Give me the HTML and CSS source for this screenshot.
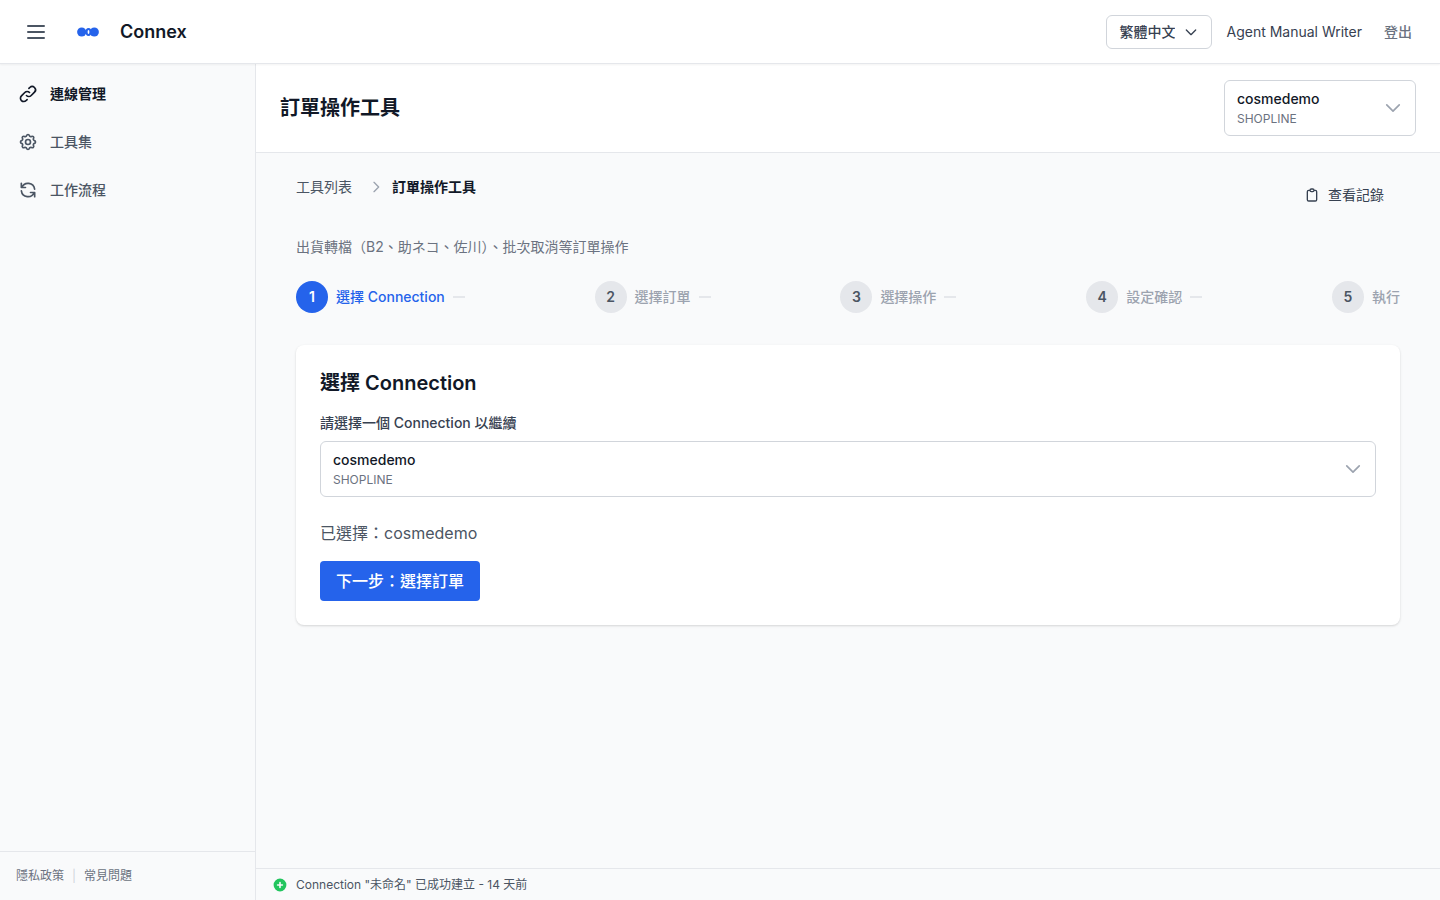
FILE: index.html
```html
<!DOCTYPE html>
<html lang="zh-Hant">
<head>
    <meta charset="UTF-8">
    <meta name="viewport" content="width=device-width, initial-scale=1.0">
    <title>訂單操作工具 - Connex</title>
    <link rel="stylesheet" href="styles.css">
</head>
<body>
    <header class="topbar">
        <button type="button" class="menu-toggle" aria-label="Menu">
            <svg class="icon icon-lg" viewBox="0 0 24 24"><path d="M4 6h16M4 12h16M4 18h16"/></svg>
        </button>
        <a href="#" class="brand">
            <svg class="logo" viewBox="0 0 32 32" aria-hidden="true">
                <circle cx="9.7" cy="16" r="4.6"/>
                <circle cx="22.3" cy="16" r="4.6"/>
                <ellipse class="logo-ring" cx="16.5" cy="16" rx="1.9" ry="3"/>
            </svg>
            <span class="brand-name">Connex</span>
        </a>
        <div class="topbar-right">
            <div class="lang">
                <select class="lang-select" aria-label="Language">
                    <option>繁體中文</option>
                </select>
                <svg class="icon icon-sm lang-arrow" viewBox="0 0 24 24"><path d="M19 9l-7 7-7-7"/></svg>
            </div>
            <span class="user-name">Agent Manual Writer</span>
            <button type="button" class="logout">登出</button>
        </div>
    </header>

    <div class="layout">
        <aside class="sidebar">
            <nav class="nav">
                <a href="#" class="nav-item active">
                    <svg class="icon" viewBox="0 0 24 24"><path d="M13.828 10.172a4 4 0 00-5.656 0l-4 4a4 4 0 105.656 5.656l1.102-1.101m-.758-4.899a4 4 0 005.656 0l4-4a4 4 0 00-5.656-5.656l-1.1 1.1"/></svg>
                    連線管理
                </a>
                <a href="#" class="nav-item">
                    <svg class="icon" viewBox="0 0 24 24"><path d="M10.325 4.317c.426-1.756 2.924-1.756 3.35 0a1.724 1.724 0 002.573 1.066c1.543-.94 3.31.826 2.37 2.37a1.724 1.724 0 001.065 2.572c1.756.426 1.756 2.924 0 3.35a1.724 1.724 0 00-1.066 2.573c.94 1.543-.826 3.31-2.37 2.37a1.724 1.724 0 00-2.572 1.065c-.426 1.756-2.924 1.756-3.35 0a1.724 1.724 0 00-2.573-1.066c-1.543.94-3.31-.826-2.37-2.37a1.724 1.724 0 00-1.065-2.572c-1.756-.426-1.756-2.924 0-3.35a1.724 1.724 0 001.066-2.573c-.94-1.543.826-3.31 2.37-2.37.996.608 2.296.07 2.572-1.065z"/><path d="M15 12a3 3 0 11-6 0 3 3 0 016 0z"/></svg>
                    工具集
                </a>
                <a href="#" class="nav-item">
                    <svg class="icon" viewBox="0 0 24 24"><path d="M4 4v5h.582m15.356 2A8.001 8.001 0 004.582 9m0 0H9m11 11v-5h-.581m0 0a8.003 8.003 0 01-15.357-2m15.357 2H15"/></svg>
                    工作流程
                </a>
            </nav>
            <div class="sidebar-footer">
                <a href="#">隱私政策</a>
                <span class="divider">|</span>
                <a href="#">常見問題</a>
            </div>
        </aside>

        <main class="main">
            <div class="page-header">
                <h1>訂單操作工具</h1>
                <button type="button" class="picker picker-small" aria-haspopup="listbox">
                    <span class="picker-text">
                        <span class="picker-name">cosmedemo</span>
                        <span class="picker-type">SHOPLINE</span>
                    </span>
                    <svg class="icon icon-muted" viewBox="0 0 24 24"><path d="M19.5 8.25l-7.5 7.5-7.5-7.5"/></svg>
                </button>
            </div>

            <div class="content">
                <div class="toolbar">
                    <nav class="breadcrumb">
                        <a href="#">工具列表</a>
                        <svg class="icon icon-sm icon-muted" viewBox="0 0 24 24"><path d="M9 5l7 7-7 7"/></svg>
                        <span class="current">訂單操作工具</span>
                    </nav>
                    <button type="button" class="log-button">
                        <svg class="icon icon-sm" viewBox="0 0 24 24"><path d="M9 5H7a2 2 0 00-2 2v12a2 2 0 002 2h10a2 2 0 002-2V7a2 2 0 00-2-2h-2M9 5a2 2 0 002 2h2a2 2 0 002-2M9 5a2 2 0 012-2h2a2 2 0 012 2"/></svg>
                        查看記錄
                    </button>
                </div>

                <p class="description">出貨轉檔（B2、助ネコ、佐川）、批次取消等訂單操作</p>

                <ol class="steps">
                    <li class="step active"><span class="step-number">1</span><span>選擇 Connection</span></li>
                    <li class="step"><span class="step-number">2</span><span>選擇訂單</span></li>
                    <li class="step"><span class="step-number">3</span><span>選擇操作</span></li>
                    <li class="step"><span class="step-number">4</span><span>設定確認</span></li>
                    <li class="step"><span class="step-number">5</span><span>執行</span></li>
                </ol>

                <section class="card">
                    <h2>選擇 Connection</h2>
                    <label class="field-label" for="connection">請選擇一個 Connection 以繼續</label>
                    <button type="button" id="connection" class="picker" aria-haspopup="listbox">
                        <span class="picker-text">
                            <span class="picker-name">cosmedemo</span>
                            <span class="picker-type">SHOPLINE</span>
                        </span>
                        <svg class="icon icon-muted" viewBox="0 0 24 24"><path d="M19.5 8.25l-7.5 7.5-7.5-7.5"/></svg>
                    </button>
                    <p class="selected">已選擇：cosmedemo</p>
                    <button type="button" class="primary-button">下一步：選擇訂單</button>
                </section>
            </div>

            <footer class="statusbar">
                <svg class="status-icon" viewBox="0 0 20 20" aria-hidden="true"><path fill-rule="evenodd" d="M10 18a8 8 0 100-16 8 8 0 000 16zm1-11a1 1 0 10-2 0v2H7a1 1 0 100 2h2v2a1 1 0 102 0v-2h2a1 1 0 100-2h-2V7z"/></svg>
                <span>Connection "未命名" 已成功建立 - 14 天前</span>
            </footer>
        </main>
    </div>
</body>
</html>
```

FILE: styles.css
```css
* {
    box-sizing: border-box;
}
body {
    margin: 0;
    min-height: 100vh;
    display: flex;
    flex-direction: column;
    font-family: Inter, "Noto Sans CJK TC", sans-serif;
    font-size: 14px;
    line-height: 20px;
    color: #111827;
    background-color: #f9fafb;
}
h1, h2, p, ol {
    margin: 0;
    padding: 0;
}
h1, h2 {
    font-size: 20px;
    line-height: 28px;
    font-weight: 600;
}
a {
    color: inherit;
    text-decoration: none;
}
button, select {
    font: inherit;
    color: inherit;
    background: none;
    border: none;
    padding: 0;
    cursor: pointer;
}
.icon {
    width: 20px;
    height: 20px;
    flex-shrink: 0;
    fill: none;
    stroke: currentColor;
    stroke-width: 2;
    stroke-linecap: round;
    stroke-linejoin: round;
}
.icon-sm {
    width: 16px;
    height: 16px;
}
.icon-lg {
    width: 24px;
    height: 24px;
}
.icon-muted {
    color: #9ca3af;
}

/* Top bar */
.topbar {
    display: flex;
    align-items: center;
    gap: 16px;
    height: 64px;
    padding: 0 20px 0 16px;
    background-color: #fff;
    border-bottom: 1px solid #e5e7eb;
    box-shadow: 0 1px 2px rgba(0,0,0,0.05);
    position: relative;
}
.menu-toggle {
    display: flex;
    padding: 8px;
    color: #4b5563;
}
.brand {
    display: flex;
    align-items: center;
    gap: 16px;
}
.logo {
    width: 32px;
    height: 32px;
    fill: #2563eb;
}
.logo-ring {
    fill: #fff;
    stroke: #2563eb;
    stroke-width: 2;
}
.brand-name {
    font-size: 18px;
    line-height: 28px;
    font-weight: 600;
}
.topbar-right {
    display: flex;
    align-items: center;
    gap: 14px;
    margin-left: auto;
}
.lang {
    position: relative;
}
.lang-select {
    display: block;
    appearance: none;
    height: 34px;
    padding: 0 36px 0 12px;
    border: 1px solid #d1d5db;
    border-radius: 6px;
    background-color: #fff;
    font-weight: 500;
    color: #374151;
}
.lang-arrow {
    position: absolute;
    right: 13px;
    top: 9px;
    color: #374151;
    pointer-events: none;
}
.user-name {
    color: #374151;
}
.logout {
    padding: 8px;
    font-weight: 500;
    color: #6b7280;
}

/* Sidebar */
.layout {
    flex: 1;
    display: flex;
}
.sidebar {
    width: 256px;
    flex-shrink: 0;
    display: flex;
    flex-direction: column;
    border-right: 1px solid #e5e7eb;
}
.nav {
    flex: 1;
    display: flex;
    flex-direction: column;
    gap: 8px;
    padding: 10px 8px;
}
.nav-item {
    display: flex;
    align-items: center;
    gap: 12px;
    padding: 10px;
    font-weight: 500;
    color: #4b5563;
}
.nav-item.active {
    font-weight: 600;
    color: #111827;
}
.sidebar-footer {
    display: flex;
    gap: 8px;
    padding: 16px;
    border-top: 1px solid #e5e7eb;
    font-size: 12px;
    line-height: 16px;
    color: #6b7280;
}
.divider {
    color: #d1d5db;
}

/* Main area */
.main {
    flex: 1;
    min-width: 0;
    display: flex;
    flex-direction: column;
}
.page-header {
    display: flex;
    align-items: center;
    justify-content: space-between;
    padding: 16px 24px;
    background-color: #fff;
    border-bottom: 1px solid #e5e7eb;
}
.picker {
    display: flex;
    align-items: center;
    justify-content: space-between;
    width: 100%;
    padding: 8px 12px;
    border: 1px solid #d1d5db;
    border-radius: 6px;
    background-color: #fff;
    text-align: left;
}
.picker-small {
    width: 192px;
}
.picker-name {
    display: block;
    line-height: 20px;
    font-weight: 500;
    color: #111827;
}
.picker-type {
    display: block;
    margin-top: 2px;
    font-size: 12px;
    line-height: 16px;
    color: #6b7280;
}
.content {
    flex: 1;
    padding: 24px 40px;
}
.toolbar {
    display: flex;
    align-items: flex-start;
    justify-content: space-between;
    margin-bottom: 24px;
}
.breadcrumb {
    display: flex;
    align-items: center;
    gap: 8px;
    color: #4b5563;
}
.breadcrumb a {
    padding-right: 8px;
}
.breadcrumb .current {
    font-weight: 600;
    color: #111827;
}
.log-button {
    display: flex;
    align-items: center;
    gap: 8px;
    padding: 8px 16px;
    color: #374151;
}
.description {
    margin-bottom: 24px;
    color: #6b7280;
}

/* Steps */
.steps {
    display: flex;
    justify-content: space-between;
    margin-bottom: 32px;
    list-style: none;
}
.step {
    display: flex;
    align-items: center;
    gap: 8px;
    font-weight: 500;
    color: #9ca3af;
}
.step:not(:last-child)::after {
    content: "";
    width: 12px;
    height: 2px;
    background-color: #e5e7eb;
}
.step-number {
    width: 32px;
    height: 32px;
    border-radius: 50%;
    line-height: 32px;
    text-align: center;
    font-weight: 600;
    color: #4b5563;
    background-color: #e5e7eb;
}
.step.active {
    color: #2563eb;
}
.step.active .step-number {
    color: #fff;
    background-color: #2563eb;
}

/* Card */
.card {
    padding: 24px;
    border-radius: 8px;
    background-color: #fff;
    box-shadow: 0 1px 3px rgba(0,0,0,0.1), 0 1px 2px rgba(0,0,0,0.06);
}
.card h2 {
    margin-bottom: 16px;
}
.field-label {
    display: block;
    margin-bottom: 8px;
    font-weight: 500;
    color: #374151;
}
.selected {
    margin: 24px 0 16px;
    font-size: 16px;
    line-height: 24px;
    color: #4b5563;
}
.primary-button {
    padding: 8px 16px;
    border-radius: 4px;
    background-color: #2563eb;
    font-size: 16px;
    line-height: 24px;
    font-weight: 500;
    color: #fff;
}
.primary-button:hover {
    background-color: #1d4ed8;
}

/* Status bar */
.statusbar {
    display: flex;
    align-items: center;
    gap: 8px;
    height: 32px;
    padding: 0 16px;
    border-top: 1px solid #e5e7eb;
    font-size: 12px;
    line-height: 16px;
    color: #4b5563;
}
.status-icon {
    width: 16px;
    height: 16px;
    fill: #22c55e;
}
```
